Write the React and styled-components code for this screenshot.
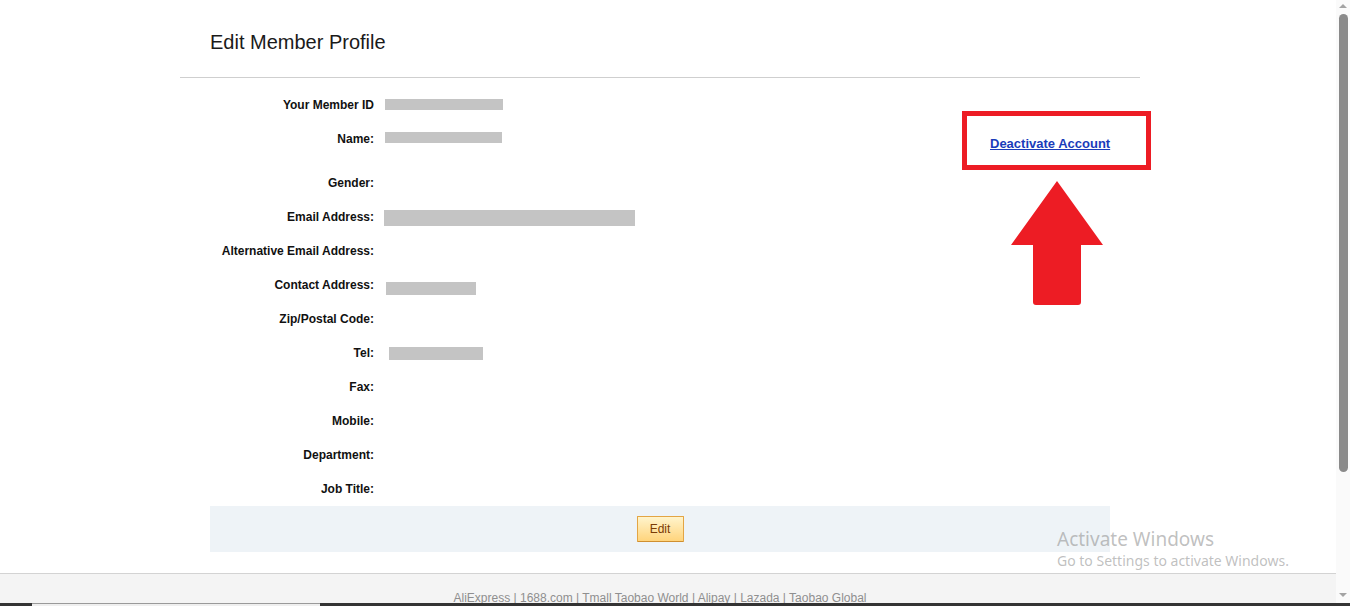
import { styled, createGlobalStyle } from 'styled-components';

const GlobalStyle = createGlobalStyle`
  html, body {
    margin: 0;
    padding: 0;
    background: #fff;
    font-family: Arial, "Liberation Sans", sans-serif;
    overflow: hidden;
  }
`;

const FIELDS = [
  { label: 'Your Member ID', bar: { width: 118, height: 11, left: 11, top: -1 } },
  { label: 'Name:', bar: { width: 117, height: 11, left: 11, top: -3 }, extra: true },
  { label: 'Gender:' },
  { label: 'Email Address:', bar: { width: 251, height: 16, left: 10, top: 2 } },
  { label: 'Alternative Email Address:' },
  { label: 'Contact Address:', bar: { width: 90, height: 13, left: 12, top: 7 } },
  { label: 'Zip/Postal Code:' },
  { label: 'Tel:', bar: { width: 94, height: 13, left: 15, top: 1 } },
  { label: 'Fax:' },
  { label: 'Mobile:' },
  { label: 'Department:' },
  { label: 'Job Title:' },
];

const FOOTER_LINKS = ['AliExpress', '1688.com', 'Tmall Taobao World', 'Alipay', 'Lazada', 'Taobao Global'];

const App = () => {
  return (
    <Page>
      <GlobalStyle />
      <Viewport>
        <Main>
          <Container>
            <Header>
              <Title>Edit Member Profile</Title>
            </Header>
            <Body>
              <Fields>
                {FIELDS.map((f) => (
                  <Row key={f.label} $extra={f.extra}>
                    <Label>{f.label}</Label>
                    {f.bar && (
                      <Masked
                        $w={f.bar.width}
                        $h={f.bar.height}
                        $left={f.bar.left}
                        $top={f.bar.top}
                      />
                    )}
                  </Row>
                ))}
              </Fields>
              <Aside>
                <Highlight>
                  <DeactivateLink href="#">Deactivate Account</DeactivateLink>
                </Highlight>
                <Arrow width="92" height="124" viewBox="0 0 92 124">
                  <path
                    d="M46 0 L92 64 L70 64 L70 121 Q70 124 67 124 L25 124 Q22 124 22 121 L22 64 L0 64 Z"
                    fill="#ed1c24"
                  />
                </Arrow>
              </Aside>
            </Body>
            <ActionBar>
              <EditButton type="button">Edit</EditButton>
            </ActionBar>
          </Container>
          <Footer>
            <FooterLinks>
              {FOOTER_LINKS.map((l, i) => (
                <span key={l}>
                  {i > 0 && ' | '}
                  <FooterLink href="#">{l}</FooterLink>
                </span>
              ))}
            </FooterLinks>
          </Footer>
        </Main>
        <Scrollbar>
          <ScrollArrow $dir="up" />
          <ScrollThumb />
          <ScrollArrow $dir="down" />
        </Scrollbar>
      </Viewport>
      <Taskbar>
        <TaskSeg $w={32} />
        <TaskSeg $w={288} $light />
        <TaskSeg $flex />
      </Taskbar>
      <Watermark>
        <WatermarkTitle>Activate Windows</WatermarkTitle>
        <WatermarkText>Go to Settings to activate Windows.</WatermarkText>
      </Watermark>
    </Page>
  );
};

const Page = styled.div`
  position: relative;
  width: 1350px;
  height: 606px;
  display: flex;
  flex-direction: column;
  overflow: hidden;
`;
const Viewport = styled.div`
  flex: 1;
  display: flex;
  min-height: 0;
`;
const Main = styled.div`
  flex: 1;
  display: flex;
  flex-direction: column;
`;
const Container = styled.div`
  width: 960px;
  margin-left: 180px;
  margin-bottom: 21px;
`;
const Header = styled.div`
  height: 78px;
  box-sizing: border-box;
  padding: 31px 0 0 30px;
  border-bottom: 1px solid #cfcfcf;
`;
const Title = styled.h1`
  margin: 0;
  font-size: 20px;
  line-height: 23px;
  font-weight: normal;
  color: #1a1a1a;
`;
const Body = styled.div`
  display: flex;
`;
const Fields = styled.div`
  width: 782px;
  flex-shrink: 0;
  padding-top: 10px;
`;
const Row = styled.div`
  display: flex;
  align-items: center;
  height: 34px;
  margin-bottom: ${(p) => (p.$extra ? '10px' : '0')};
`;
const Label = styled.span`
  width: 194px;
  flex-shrink: 0;
  text-align: right;
  font-size: 12px;
  font-weight: bold;
  color: #111;
`;
const Masked = styled.span`
  width: ${(p) => p.$w}px;
  height: ${(p) => p.$h}px;
  margin-left: ${(p) => p.$left}px;
  margin-top: ${(p) => p.$top}px;
  background: #c4c4c4;
`;
const Aside = styled.div`
  flex-shrink: 0;
  padding-top: 33px;
  display: flex;
  flex-direction: column;
`;
const Highlight = styled.div`
  width: 189px;
  height: 59px;
  box-sizing: border-box;
  border: 5px solid #ed1c24;
  padding: 6px 0 0 23px;
  display: flex;
  align-items: center;
`;
const DeactivateLink = styled.a`
  font-size: 13px;
  font-weight: bold;
  color: #1a3cba;
  text-decoration: underline;
`;
const Arrow = styled.svg`
  display: block;
  margin: 11px 0 0 49px;
`;
const ActionBar = styled.div`
  width: 900px;
  height: 46px;
  margin-left: 30px;
  background: #eef3f7;
  display: flex;
  justify-content: center;
  align-items: flex-start;
  padding-top: 10px;
  box-sizing: border-box;
`;
const EditButton = styled.button`
  width: 47px;
  height: 26px;
  padding: 0;
  border: 1px solid #e3a544;
  border-bottom-color: #cf8f30;
  border-radius: 1px;
  background: linear-gradient(#fff4cc, #ffd47c);
  font-family: Arial, "Liberation Sans", sans-serif;
  font-size: 12px;
  color: #7a3b06;
  cursor: pointer;
`;
const Footer = styled.footer`
  flex: 1;
  background: #f4f4f4;
  border-top: 1px solid #d3d3d3;
  padding-top: 17px;
`;
const FooterLinks = styled.div`
  width: 960px;
  margin-left: 180px;
  text-align: center;
  font-size: 12px;
  line-height: 14px;
  color: #8f8f8f;
`;
const FooterLink = styled.a`
  color: #8f8f8f;
  text-decoration: none;
`;
const Scrollbar = styled.div`
  width: 14px;
  background: #fafafa;
  display: flex;
  flex-direction: column;
  align-items: center;
  position: relative;
`;
const ScrollArrow = styled.span`
  position: absolute;
  left: 3px;
  ${(p) => (p.$dir === 'up' ? 'top: 4px;' : 'bottom: 6px;')}
  width: 0;
  height: 0;
  border-left: 4px solid transparent;
  border-right: 4px solid transparent;
  ${(p) =>
    p.$dir === 'up'
      ? 'border-bottom: 4px solid #a3a3a3;'
      : 'border-top: 4px solid #a3a3a3;'}
`;
const ScrollThumb = styled.div`
  width: 9px;
  height: 458px;
  margin-top: 14px;
  margin-left: 1px;
  border-radius: 5px;
  background: #8a8a8a;
`;
const Taskbar = styled.div`
  height: 3px;
  display: flex;
`;
const TaskSeg = styled.div`
  width: ${(p) => (p.$w ? `${p.$w}px` : 'auto')};
  flex: ${(p) => (p.$flex ? 1 : 'none')};
  background: ${(p) => (p.$light ? '#efefef' : '#343434')};
  border-top: ${(p) => (p.$light ? '1px solid #9a9a9a' : 'none')};
  box-sizing: border-box;
`;
const Watermark = styled.div`
  position: absolute;
  left: 1057px;
  top: 527px;
  font-family: "Noto Sans", "Open Sans", sans-serif;
  color: rgba(150, 150, 150, 0.6);
  pointer-events: none;
`;
const WatermarkTitle = styled.div`
  font-size: 19px;
  line-height: 24px;
`;
const WatermarkText = styled.div`
  font-size: 14px;
  line-height: 20px;
`;

export default App;
